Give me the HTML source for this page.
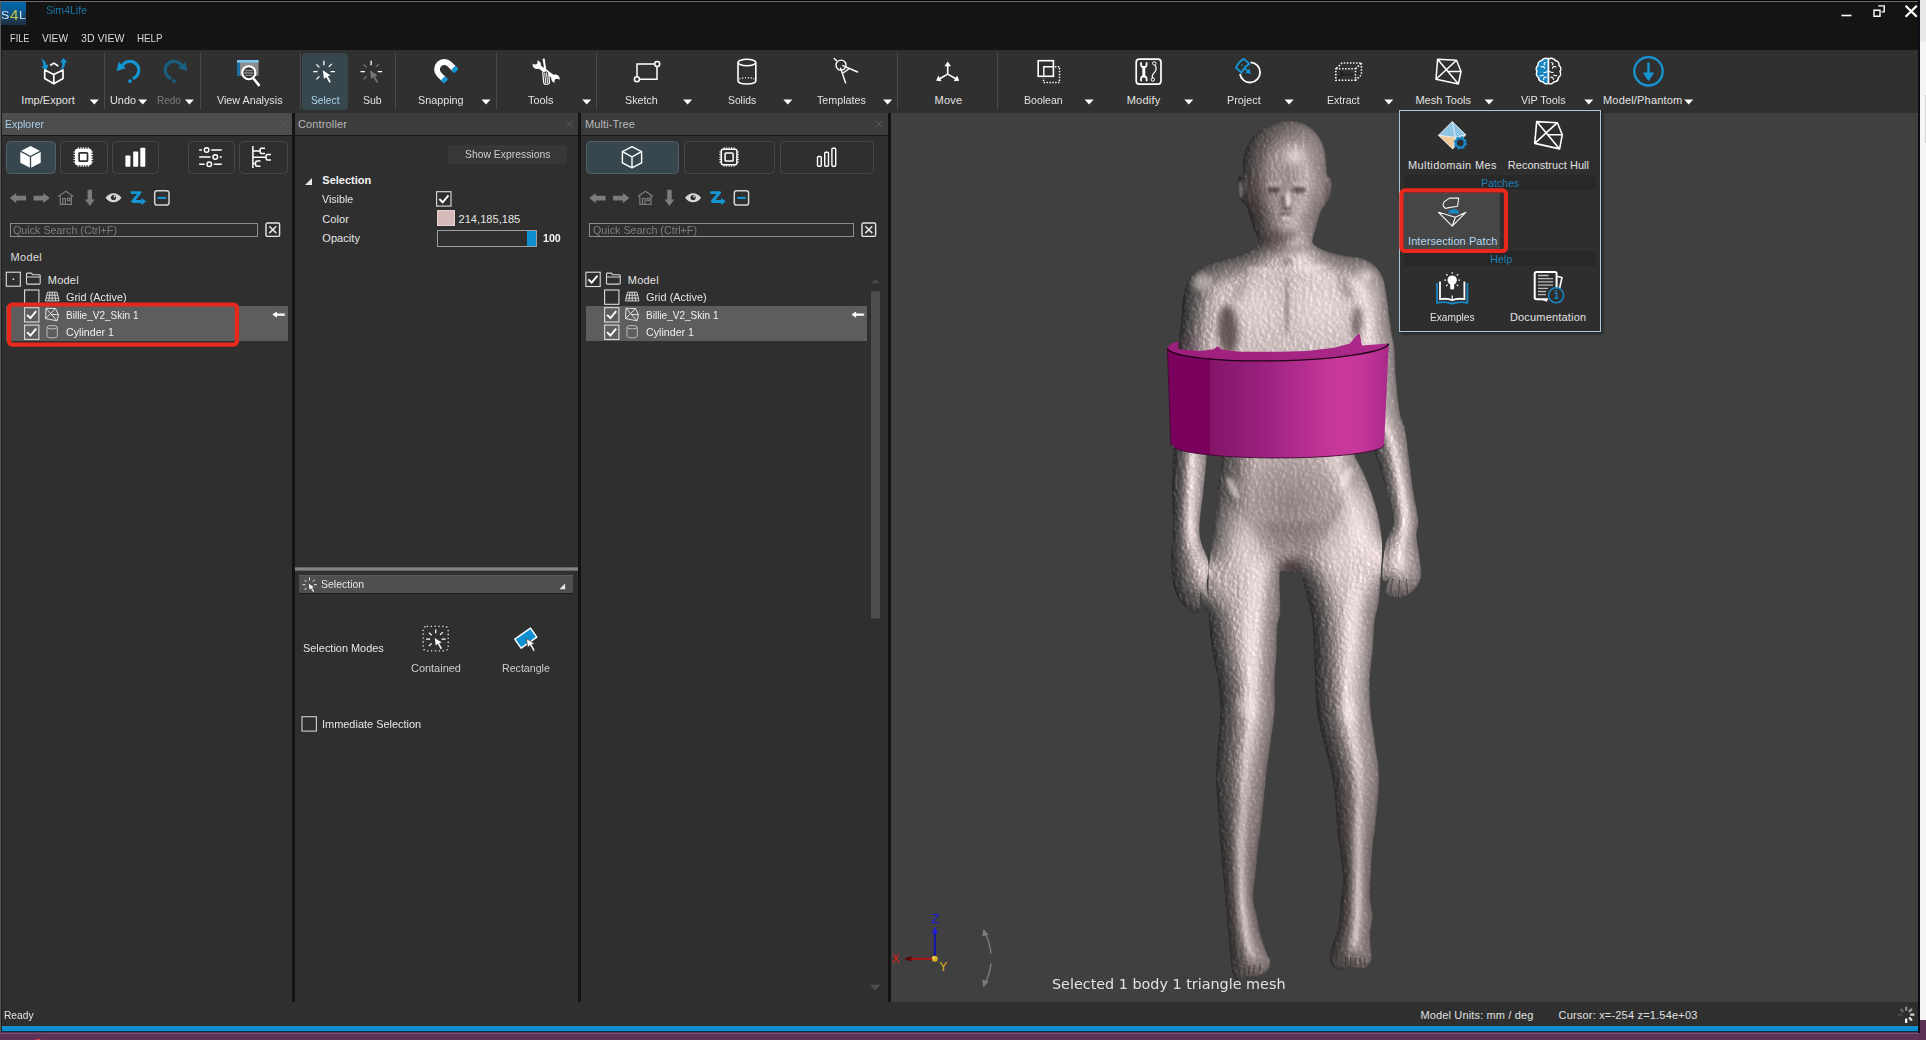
<!DOCTYPE html>
<html><head><meta charset="utf-8"><title>Sim4Life</title>
<style>
*{box-sizing:border-box;margin:0;padding:0}
html,body{width:1926px;height:1040px;overflow:hidden;background:#5c3357}
body{font-family:"Liberation Sans",sans-serif;font-size:11px;color:#e4e4e4;position:relative}
.abs{position:absolute}
svg{position:absolute;overflow:visible}
#win{position:absolute;left:0;top:0;width:1920px;height:1032px;background:#2f2f2f;overflow:hidden}
.t{position:absolute;white-space:nowrap}

#titlebar{position:absolute;left:0;top:0;width:1920px;height:50px;background:#141414}
#toolbar{position:absolute;left:0;top:50px;width:1920px;height:63px;background:#303030}
.hdr{position:absolute;top:113px;height:22px;background:#3c3c3c}
.vdiv{position:absolute;top:113px;width:3px;height:889px;background:#131313}

</style></head>
<body>
<div id="win">

<div id="titlebar">
<div class="abs" style="left:0;top:0;width:1920px;height:1px;background:#000"></div>
<div class="abs" style="left:0;top:1px;width:1920px;height:1px;background:#6e6e6e"></div>
<div class="abs" style="left:1px;top:2px;width:25px;height:23px;background:linear-gradient(#0068a8,#0a5c96 35%,#1d3e5c 75%,#1c2e40)"></div>
<span class="t" style="left:1.40px;top:8.77px;line-height:13px;height:13px;font-size:10.9px;color:#cfe4f4;transform:scaleX(1.14);transform-origin:0 0;">S</span><span class="t" style="left:9.60px;top:6.88px;line-height:17px;height:17px;font-size:14.2px;color:#bcc84e;transform:scaleX(1.08);transform-origin:0 0;">4</span><span class="t" style="left:18.60px;top:8.77px;line-height:13px;height:13px;font-size:10.9px;color:#cfe4f4;transform:scaleX(1.16);transform-origin:0 0;">L</span>
<span class="t" style="transform:scaleX(0.9580);transform-origin:0 0;left:46.00px;top:3.19px;line-height:14px;height:14px;color:#1b74a6;">Sim4Life</span>
<span class="t" style="transform:scaleX(0.8394);transform-origin:0 0;left:10.00px;top:31.19px;line-height:14px;height:14px;color:#d8d8d8;">FILE</span><span class="t" style="transform:scaleX(0.9248);transform-origin:0 0;left:42.00px;top:31.19px;line-height:14px;height:14px;color:#d8d8d8;">VIEW</span><span class="t" style="transform:scaleX(0.9617);transform-origin:0 0;left:80.50px;top:31.19px;line-height:14px;height:14px;color:#d8d8d8;">3D VIEW</span><span class="t" style="transform:scaleX(0.8874);transform-origin:0 0;left:136.50px;top:31.19px;line-height:14px;height:14px;color:#d8d8d8;">HELP</span>
<svg style="left:1836px;top:2px" width="84" height="24" viewBox="1836 2 84 24">
<path d="M1841.5 15.5h10" stroke="#fff" stroke-width="1.6" fill="none"/>
<path d="M1878.200 5.900h6v6h-2.700M1874 10.200h6v6h-6z" stroke="#fff" stroke-width="1.400" fill="none"/>
<path d="M1905.600 5.800l11.200 11M1916.800 5.800l-11.200 11" stroke="#fff" stroke-width="2.200" fill="none"/>
</svg>
</div>
<div id="toolbar"></div>
<div class="abs" style="left:0;top:2px;width:1px;height:1030px;background:#5a5a5a"></div>
<div class="abs" style="left:1px;top:50px;width:1px;height:982px;background:#1c1c1c"></div>
<div class="hdr" style="left:2px;width:290px;background:#4d4d4d"></div>
<div class="hdr" style="left:295px;width:283px"></div>
<div class="hdr" style="left:581px;width:307px"></div>
<span class="t" style="transform:scaleX(0.9521);transform-origin:0 0;left:5.00px;top:117.19px;line-height:14px;height:14px;color:#a6d0e8;">Explorer</span><span class="t" style="letter-spacing:0.132px;left:298.00px;top:117.19px;line-height:14px;height:14px;color:#b9b9b9;">Controller</span><span class="t" style="letter-spacing:0.090px;left:585.00px;top:117.19px;line-height:14px;height:14px;color:#b9b9b9;">Multi-Tree</span>
<svg style="left:0;top:113px" width="900" height="22" viewBox="0 113 900 22">
<path d="M280 120.5l7 7m0-7l-7 7" stroke="#5c5c5c" stroke-width="1" fill="none"/>
<path d="M566 120.5l7 7m0-7l-7 7" stroke="#5a5a5a" stroke-width="1" fill="none"/>
<path d="M875.5 120.5l7 7m0-7l-7 7" stroke="#5a5a5a" stroke-width="1" fill="none"/>
</svg>
<div class="abs" style="left:2px;top:135px;width:886px;height:1px;background:#171717"></div>
<div class="vdiv" style="left:292px"></div>
<div class="vdiv" style="left:578px"></div>
<div class="vdiv" style="left:888px"></div>
<div id="view3d" class="abs" style="left:891px;top:113px;width:1028px;height:889px;background:#404040"></div>
<div class="abs" style="left:302px;top:52.5px;width:46px;height:57.5px;background:#38474e;border-radius:4px"></div><span class="t" style="letter-spacing:0.031px;left:21.30px;top:93.39px;line-height:14px;height:14px;color:#e2e2e2;">Imp/Export</span><span class="t" style="transform:scaleX(0.9888);transform-origin:0 0;left:109.50px;top:93.39px;line-height:14px;height:14px;color:#e2e2e2;">Undo</span><span class="t" style="transform:scaleX(0.9089);transform-origin:0 0;left:157.30px;top:93.39px;line-height:14px;height:14px;color:#7a7a7a;">Redo</span><span class="t" style="transform:scaleX(0.9769);transform-origin:0 0;left:217.10px;top:93.39px;line-height:14px;height:14px;color:#e2e2e2;">View Analysis</span><span class="t" style="transform:scaleX(0.9322);transform-origin:0 0;left:310.60px;top:93.39px;line-height:14px;height:14px;color:#a9d5ef;">Select</span><span class="t" style="transform:scaleX(0.9554);transform-origin:0 0;left:362.50px;top:93.39px;line-height:14px;height:14px;color:#e2e2e2;">Sub</span><span class="t" style="transform:scaleX(0.9810);transform-origin:0 0;left:417.70px;top:93.39px;line-height:14px;height:14px;color:#e2e2e2;">Snapping</span><span class="t" style="transform:scaleX(0.9931);transform-origin:0 0;left:528.20px;top:93.39px;line-height:14px;height:14px;color:#e2e2e2;">Tools</span><span class="t" style="transform:scaleX(0.9754);transform-origin:0 0;left:625.40px;top:93.39px;line-height:14px;height:14px;color:#e2e2e2;">Sketch</span><span class="t" style="transform:scaleX(0.9379);transform-origin:0 0;left:727.70px;top:93.39px;line-height:14px;height:14px;color:#e2e2e2;">Solids</span><span class="t" style="transform:scaleX(0.9754);transform-origin:0 0;left:817.10px;top:93.39px;line-height:14px;height:14px;color:#e2e2e2;">Templates</span><span class="t" style="letter-spacing:0.275px;left:934.50px;top:93.39px;line-height:14px;height:14px;color:#e2e2e2;">Move</span><span class="t" style="transform:scaleX(0.9587);transform-origin:0 0;left:1024.10px;top:93.39px;line-height:14px;height:14px;color:#e2e2e2;">Boolean</span><span class="t" style="letter-spacing:0.217px;left:1126.70px;top:93.39px;line-height:14px;height:14px;color:#e2e2e2;">Modify</span><span class="t" style="transform:scaleX(0.9843);transform-origin:0 0;left:1226.50px;top:93.39px;line-height:14px;height:14px;color:#e2e2e2;">Project</span><span class="t" style="transform:scaleX(0.9552);transform-origin:0 0;left:1326.70px;top:93.39px;line-height:14px;height:14px;color:#e2e2e2;">Extract</span><span class="t" style="letter-spacing:0.027px;left:1415.40px;top:93.39px;line-height:14px;height:14px;color:#e2e2e2;">Mesh Tools</span><span class="t" style="transform:scaleX(0.9855);transform-origin:0 0;left:1520.50px;top:93.39px;line-height:14px;height:14px;color:#e2e2e2;">ViP Tools</span><span class="t" style="letter-spacing:0.181px;left:1603.00px;top:93.39px;line-height:14px;height:14px;color:#e2e2e2;">Model/Phantom</span><svg style="left:0;top:50px" width="1920" height="63" viewBox="0 50 1920 63"><path d="M104.5 52.5v57" stroke="#4b4b4b" stroke-width="1"/><path d="M200.5 52.5v57" stroke="#4b4b4b" stroke-width="1"/><path d="M300.5 52.5v57" stroke="#4b4b4b" stroke-width="1"/><path d="M395.5 52.5v57" stroke="#4b4b4b" stroke-width="1"/><path d="M496.5 52.5v57" stroke="#4b4b4b" stroke-width="1"/><path d="M596.5 52.5v57" stroke="#4b4b4b" stroke-width="1"/><path d="M897.5 52.5v57" stroke="#4b4b4b" stroke-width="1"/><path d="M997.5 52.5v57" stroke="#4b4b4b" stroke-width="1"/><path d="M89.8 99.4h9l-4.5 5z" fill="#fff"/><path d="M138.2 99.4h9l-4.5 5z" fill="#fff"/><path d="M184.9 99.4h9l-4.5 5z" fill="#fff"/><path d="M481.5 99.4h9l-4.5 5z" fill="#fff"/><path d="M582.2 99.4h9l-4.5 5z" fill="#fff"/><path d="M683.1 99.4h9l-4.5 5z" fill="#fff"/><path d="M783.3 99.4h9l-4.5 5z" fill="#fff"/><path d="M883.1 99.4h9l-4.5 5z" fill="#fff"/><path d="M1084.6 99.4h9l-4.5 5z" fill="#fff"/><path d="M1184.3 99.4h9l-4.5 5z" fill="#fff"/><path d="M1284.6 99.4h9l-4.5 5z" fill="#fff"/><path d="M1384.3 99.4h9l-4.5 5z" fill="#fff"/><path d="M1484.6 99.4h9l-4.5 5z" fill="#fff"/><path d="M1584.3 99.4h9l-4.5 5z" fill="#fff"/><path d="M1684.2 99.4h9l-4.5 5z" fill="#fff"/><g fill="none" stroke="#fff" stroke-width="1.7" stroke-linejoin="round" stroke-linecap="round">
<path d="M44.7 69.9v8.7l9.1 5.2 9.2-5.2v-8.7 M44.7 69.9l9.1 4.6 9.2-4.6 M53.8 74.5v9.3 M50.8 65l3-1.9 4 2.6"/></g>
<path d="M41.2 58.4c3.4 1.6 4.9 4 4.9 6.6l2.3-.6-1.8 5.6-5.4-3 2.3-.7c-.2-2.900-.6-5-2.300-7.900z" fill="#1496d4"/>
<path d="M63.500 57.900l3.900 4.600-2.300-.1c.2 3.500-1.500 6.500-5 7.700 1.700-2.100 2.400-4.700 2.200-7.700l-2.300.1z" fill="#1496d4"/><g transform="translate(130.20 71) scale(1 1)"><path d="M-8.400 -4.200A8.800 8.800 0 1 1 2.500 7.500" fill="none" stroke="#1496d4" stroke-width="3.2"/><path d="M-13.700 0l2.200-9 7.200 6.300z" fill="#1496d4"/><circle cx="-.2" cy="10.100" r="1.900" fill="#1496d4"/></g><g transform="translate(173.80 71) scale(-1 1)"><path d="M-8.400 -4.200A8.800 8.800 0 1 1 2.500 7.500" fill="none" stroke="#1b5f80" stroke-width="3.2"/><path d="M-13.700 0l2.200-9 7.200 6.300z" fill="#1b5f80"/><circle cx="-.2" cy="10.100" r="1.900" fill="#1b5f80"/></g><rect x="237" y="60" width="21.500" height="15.800" fill="#8b8b8b"/><rect x="237" y="60" width="21.500" height="2.700" fill="#7fc4ec"/><rect x="237" y="62.700" width="3" height="13.100" fill="#1b6fa3"/>
<circle cx="248.800" cy="72.700" r="6.500" fill="#2c2c2c" stroke="#fff" stroke-width="2.100"/>
<path d="M244.500 70.500h8.600M244 73h9.600M245 75.400h7.600" stroke="#8b8b8b" stroke-width="1.300"/>
<path d="M253.300 78.300l6.200 7.600" stroke="#fff" stroke-width="2.500"/><g stroke="#fff" stroke-width="1.3" fill="none"><path d="M323.90 60.80v4.4 M313.30 71.60h4.4 M330.50 71.60h4.4"/></g><g stroke="#fff" stroke-width="1.3" fill="none"><path d="M316.40 64.40l3 3 M331.80 63.90l-3 3 M316.40 79.40l3 -3"/></g><path d="M322.80 70.30l1.2 8.6 2.2-2 3.2 5.9 1.5-.9-3.2-5.8 2.9-.6z" fill="#fff"/><g stroke="#fff" stroke-width="1.3" fill="none"><path d="M371.10 60.80v4.4 M360.50 71.60h4.4 M377.70 71.60h4.4"/></g><g stroke="#777" stroke-width="1.3" fill="none"><path d="M363.60 64.40l3 3 M379.00 63.90l-3 3 M363.60 79.40l3 -3"/></g><path d="M370.00 70.30l1.2 8.6 2.2-2 3.2 5.9 1.5-.9-3.2-5.8 2.9-.6z" fill="#777"/><g transform="translate(444.3 69.300) rotate(-45)"><path d="M-7.300 8.500V0A7.300 7.300 0 0 1 7.300 0V8.500" fill="none" stroke="#fff" stroke-width="5.800"/>
<rect x="-10.200" y="5.300" width="5.800" height="4.600" fill="#1496d4"/><rect x="4.400" y="5.300" width="5.800" height="4.600" fill="#1496d4"/></g><g><path d="M539 66.500L553.500 77" stroke="#fff" stroke-width="3.600"/>
<circle cx="536.800" cy="64.800" r="4.200" fill="#fff"/><circle cx="535" cy="62" r="2.500" fill="#303030"/>
<circle cx="555.400" cy="78.600" r="4.200" fill="#fff"/><circle cx="557" cy="81.300" r="2.500" fill="#303030"/>
<path d="M543.600 58.600l1.900 12.400" stroke="#fff" stroke-width="2"/>
<g transform="rotate(-6 546 77.500)"><rect x="543.200" y="71" width="5.800" height="13.200" rx="1.800" fill="#303030" stroke="#fff" stroke-width="1.200"/><path d="M545.200 72.500v10.500M547 72.500v10.500" stroke="#fff" stroke-width=".9"/></g></g><g fill="none" stroke="#fff" stroke-width="1.500"><path d="M654.300 64H637v12.300M640 79.300h17V67"/><circle cx="657.200" cy="64" r="2.500"/><circle cx="636.900" cy="79.300" r="2.500"/></g><g fill="none" stroke="#fff" stroke-width="1.600"><path d="M738 62.500v18.300c0 4.300 17.800 4.300 17.800 0V62.500"/><ellipse cx="746.900" cy="62.500" rx="8.900" ry="3.300"/><path d="M739.500 79c3-1.700 11.800-1.700 14.800 0" stroke-dasharray="1.200 1.600" stroke-width="1.200"/></g><g fill="none" stroke="#fff" stroke-width="1.400" stroke-linecap="round"><circle cx="841" cy="65.100" r="5"/><path d="M834.200 58.500l2.200 2.100M842.800 65.600l14.800 6.400M840.600 68.200l5 14.700M843.500 72.800l5.200-3.800"/></g><g transform="translate(0 .8)"><g stroke="#fff" stroke-width="1.600" fill="none"><path d="M947.700 64v9.300l-8.500 4.900M947.700 73.300l8.500 4.900"/></g>
<path d="M947.700 60.800l3.300 4.600h-6.600z M936.200 80l2.100-5.200 3.300 5.600z M959.200 80l-2.100-5.200-3.300 5.600z" fill="#fff"/></g><g fill="none" stroke="#fff"><rect x="1038.200" y="60.700" width="15.200" height="15.600" stroke-width="1.600"/><path d="M1053.400 66.700h-9.600v9.600" stroke-width="1.400"/><path d="M1055 66.700h4.500v15.800h-16v-4.500" stroke-width="1.500" stroke-dasharray="1.400 1.500"/></g><g fill="none" stroke="#fff"><rect x="1136.200" y="59.200" width="24.800" height="24.900" rx="3.200" stroke-width="1.700"/>
<path d="M1143.800 66v11.500" stroke-width="3"/><path d="M1141 62.300v2.200a2.800 2.800 0 0 0 5.600 0v-2.200M1141 81.200v-2.200a2.800 2.800 0 0 1 5.600 0v2.200" stroke-width="1.700"/>
<path d="M1154.900 64.900c2.600 3.800 1 6-.8 8s-2.800 3.800-.9 5.500" stroke-width="1.200"/><circle cx="1154.300" cy="63.300" r="1.700" stroke-width="1"/><circle cx="1152.800" cy="79.500" r="1.700" stroke-width="1"/></g><path d="M1240 74A10.100 10.100 0 1 0 1250.600 62.300" fill="none" stroke="#fff" stroke-width="1.800"/>
<path d="M1236 67.800C1237.500 64 1240 61 1243.800 58.900L1249.400 63.900C1246 65.800 1243.400 68.800 1241.600 72.700z" fill="none" stroke="#1496d4" stroke-width="1.900" stroke-linejoin="round"/>
<path d="M1245.200 68.700l3 2.800" stroke="#1496d4" stroke-width="1.700"/><path d="M1250.800 74l-5.500-1.200 4.300-4.300z" fill="#1496d4"/><circle cx="1242" cy="65.300" r=".8" fill="#1496d4"/><path d="M1341.800 68.500v5.900h11M1341.800 74.400l-5.200 5.400M1356 74.400l4.500-.2" fill="none" stroke="#0c0c0c" stroke-width="1.500" stroke-dasharray="1.500 1.600"/><g fill="none" stroke="#f4f4f4" stroke-width="1.600" stroke-dasharray="1.550 1.550"><path d="M1335.800 68.800h19.700v11.500h-19.700zM1336.500 68.300l5.600-5.300h19.300M1361.400 63v11.800l-5.600 5.300M1361 63.300l-5.300 5.300"/></g><g fill="none" stroke="#fff" stroke-width="1.500" stroke-linejoin="round"><path d="M1437.600 59.200l18.900 1 4.500 11.300-2.600 12.400-22.400-4.600zM1437.600 59.200l20.800 24.700M1456.500 60.200l-20.500 19.100M1448 71.500l13 0"/></g><g><path d="M1548.500 58.800c-2.500-1-5.500-.3-6.800 1.700-2.600.4-4 2.600-3.700 4.800-1.900 1.500-2.400 4.200-1 6.200-1.200 2.200-.5 4.900 1.600 6.100.1 2.400 2 4.100 4.300 4.100 1.300 2 3.800 2.700 5.600 1.700z" fill="#1785c0" stroke="#fff" stroke-width="1.500" stroke-linejoin="round"/>
<path d="M1548.500 58.800c2.500-1 5.500-.3 6.800 1.700 2.600.4 4 2.600 3.700 4.800 1.900 1.500 2.400 4.200 1 6.200 1.200 2.200.5 4.900-1.600 6.100-.1 2.400-2 4.100-4.300 4.100-1.300 2-3.800 2.700-5.600 1.700z" fill="#303030" stroke="#fff" stroke-width="1.500" stroke-linejoin="round"/>
<g fill="none" stroke="#fff" stroke-width="1.100" stroke-linecap="round"><path d="M1548.500 58.800v24.600"/><path d="M1545.500 62.500c-1.500.2-2 1.600-.8 2.400M1541 67c1.500-1 3.200-.4 3.500 1.200M1543.800 72.200c1.600.6 3 0 4.200-1M1540.200 75.500c1.200.4 2.300.2 3.200-.5M1546.300 77.200c-1.700-.4-3 .8-2.600 2.300"/>
<path d="M1551.500 62.500c1.500.2 2 1.600.8 2.400M1556 67c-1.500-1-3.200-.4-3.500 1.200M1553.200 72.200c-1.600.6-3 0-4.200-1M1556.800 75.500c-1.200.4-2.300.2-3.200-.5M1550.700 77.200c1.700-.4 3 .8 2.600 2.300"/></g></g><circle cx="1648.500" cy="71.300" r="14.200" fill="none" stroke="#1496d4" stroke-width="2.300"/><path d="M1648.500 63.500v10" stroke="#1496d4" stroke-width="2.400" stroke-linecap="round"/><path d="M1643.500 73h10l-5 7.600z" fill="#1496d4" stroke="#1496d4" stroke-width="1" stroke-linejoin="round"/></svg><div class="abs" style="left:6.0px;top:141px;width:49.5px;height:33px;background:#38474e;border:1px solid #4f6068;border-radius:4.500px"></div><div class="abs" style="left:60.0px;top:141px;width:48.0px;height:33px;border:1px solid #474747;border-radius:4.500px"></div><div class="abs" style="left:112.0px;top:141px;width:47.0px;height:33px;border:1px solid #474747;border-radius:4.500px"></div><div class="abs" style="left:188.0px;top:141px;width:47.0px;height:33px;border:1px solid #474747;border-radius:4.500px"></div><div class="abs" style="left:239.0px;top:141px;width:49.0px;height:33px;border:1px solid #474747;border-radius:4.500px"></div><div class="abs" style="left:586.0px;top:141px;width:93.0px;height:33px;background:#38474e;border:1px solid #4f6068;border-radius:4.500px"></div><div class="abs" style="left:684.0px;top:141px;width:91.0px;height:33px;border:1px solid #474747;border-radius:4.500px"></div><div class="abs" style="left:780.0px;top:141px;width:94.0px;height:33px;border:1px solid #474747;border-radius:4.500px"></div><div class="abs" style="left:9.7px;top:222.500px;width:248.3px;height:14px;border:1px solid #8c8c8c"></div><span class="t" style="transform:scaleX(0.9750);transform-origin:0 0;left:13.20px;top:222.69px;line-height:14px;height:14px;color:#7d7d7d;">Quick Search (Ctrl+F)</span><svg style="left:265.0px;top:222px" width="16" height="16" viewBox="0 0 16 16"><rect x="1" y="1" width="13.600" height="13.400" rx="1.300" fill="none" stroke="#e6e6e6" stroke-width="1.400"/><path d="M4.300 4.300l7 6.800M11.300 4.300l-7 6.800" stroke="#e6e6e6" stroke-width="1.500"/></svg><div class="abs" style="left:589.3px;top:222.500px;width:264.4px;height:14px;border:1px solid #8c8c8c"></div><span class="t" style="transform:scaleX(0.9750);transform-origin:0 0;left:592.80px;top:222.69px;line-height:14px;height:14px;color:#7d7d7d;">Quick Search (Ctrl+F)</span><svg style="left:861.0px;top:222px" width="16" height="16" viewBox="0 0 16 16"><rect x="1" y="1" width="13.600" height="13.400" rx="1.300" fill="none" stroke="#e6e6e6" stroke-width="1.400"/><path d="M4.300 4.300l7 6.800M11.300 4.300l-7 6.800" stroke="#e6e6e6" stroke-width="1.500"/></svg><div class="abs" style="left:6px;top:305.500px;width:282px;height:35.500px;background:#5d5d5d"></div><div class="abs" style="left:586px;top:305.500px;width:281px;height:35.500px;background:#5d5d5d"></div><span class="t" style="letter-spacing:0.308px;left:10.60px;top:249.99px;line-height:14px;height:14px;color:#dcdcdc;">Model</span><span class="t" style="letter-spacing:0.208px;left:47.80px;top:272.59px;line-height:14px;height:14px;color:#e6e6e6;">Model</span><span class="t" style="transform:scaleX(0.9915);transform-origin:0 0;left:65.80px;top:289.79px;line-height:14px;height:14px;color:#e6e6e6;">Grid (Active)</span><span class="t" style="transform:scaleX(0.9121);transform-origin:0 0;left:66.00px;top:307.69px;line-height:14px;height:14px;color:#f0f0f0;">Billie_V2_Skin 1</span><span class="t" style="transform:scaleX(0.9693);transform-origin:0 0;left:65.80px;top:324.99px;line-height:14px;height:14px;color:#f0f0f0;">Cylinder 1</span><span class="t" style="letter-spacing:0.208px;left:627.80px;top:272.59px;line-height:14px;height:14px;color:#e6e6e6;">Model</span><span class="t" style="transform:scaleX(0.9915);transform-origin:0 0;left:645.80px;top:289.79px;line-height:14px;height:14px;color:#e6e6e6;">Grid (Active)</span><span class="t" style="transform:scaleX(0.9121);transform-origin:0 0;left:646.00px;top:307.69px;line-height:14px;height:14px;color:#f0f0f0;">Billie_V2_Skin 1</span><span class="t" style="transform:scaleX(0.9693);transform-origin:0 0;left:645.80px;top:324.99px;line-height:14px;height:14px;color:#f0f0f0;">Cylinder 1</span><svg style="left:0;top:136px" width="890" height="866" viewBox="0 136 890 866"><path d="M30.500 146l10.200 5.200v11.500l-10.200 5.400-10.200-5.400v-11.500z" fill="#fff"/><path d="M20.300 151.200l10.200 5.300 10.200-5.300M30.500 156.500v11.600" fill="none" stroke="#38474e" stroke-width="1.300"/><rect x="75.0" y="148.7" width="16.600" height="16.600" rx="2" fill="#fff"/><g stroke="#fff" stroke-width="1.100"><path d="M78.30 147.20v19.600M73.50 152.00h19.600"/><path d="M80.80 147.20v19.600M73.50 154.50h19.600"/><path d="M83.30 147.20v19.600M73.50 157.00h19.600"/><path d="M85.80 147.20v19.600M73.50 159.50h19.600"/><path d="M88.30 147.20v19.600M73.50 162.00h19.600"/></g><rect x="79.1" y="152.8" width="8.400" height="8.400" rx=".800" fill="#fff" stroke="#303030" stroke-width="1.700"/><rect x="125.400" y="155.500" width="5" height="11.300" rx=".800" fill="#fff"/><rect x="133.200" y="151.600" width="5" height="15.200" rx=".800" fill="#fff"/><rect x="140.300" y="147.700" width="5" height="19.100" rx=".800" fill="#fff"/><g fill="none" stroke="#fff" stroke-width="1.500"><path d="M199.200 150h2.600M211.200 150h10.600M199.200 157h11.400M219.800 157h2M199.200 164.200h5.400M213.800 164.200h8"/><circle cx="206.600" cy="150" r="2.300"/><circle cx="215.300" cy="157" r="2.300"/><circle cx="209.300" cy="164.200" r="2.300"/></g><g fill="none" stroke="#fff" stroke-width="1.500"><path d="M252.900 146.100v21.800M252.900 150.900h7.200M265 148.200h-3.400q-1.500 0-1.500 1.500v2.400q0 1.500 1.500 1.500h3.400M252.900 157.200h13M271 154.500h-3.400q-1.500 0-1.500 1.500v2.400q0 1.500 1.500 1.500h3.400M252.900 163.600h2.600M260.500 160.900h-3.400q-1.500 0-1.500 1.500v2.400q0 1.500 1.500 1.500h3.400"/></g><g fill="none" stroke="#fff" stroke-width="1.400" stroke-linejoin="round"><path d="M632 146.700l9.600 5v11.200l-9.600 5-9.600-5v-11.200zM622.400 151.700l9.600 5.200 9.600-5.200M632 156.900v11"/></g><g stroke="#fff" stroke-width=".900"><path d="M724.10 147.20v19.600M719.30 152.00h19.600"/><path d="M726.60 147.20v19.600M719.30 154.50h19.600"/><path d="M729.10 147.20v19.600M719.30 157.00h19.600"/><path d="M731.60 147.20v19.600M719.30 159.50h19.600"/><path d="M734.10 147.20v19.600M719.30 162.00h19.600"/></g><rect x="721.3" y="149.2" width="15.600" height="15.600" rx="2" fill="#303030" stroke="#fff" stroke-width="1.500"/><rect x="725.1" y="153.0" width="8" height="8" rx=".800" fill="none" stroke="#fff" stroke-width="1.500"/><g fill="none" stroke="#fff" stroke-width="1.400"><rect x="817.500" y="156.500" width="3.800" height="9.800" rx="1"/><rect x="824.700" y="152.300" width="3.800" height="14" rx="1"/><rect x="831.900" y="148.200" width="3.800" height="18.100" rx="1"/></g><g transform="translate(0.0 0)"><path d="M9.700 198l6.500-5v2.800h9.800v4.600h-9.800v2.800z" fill="#7b7b7b"/><path d="M49.800 198l-6.500-5v2.800h-9.800v4.600h9.800v2.800z" fill="#7b7b7b"/><g fill="none" stroke="#7b7b7b" stroke-width="1.200"><path d="M58.200 196.600l7.600-5.300 7.600 5.300M60.200 195.800v8.500h11.200v-8.500M62.800 204v-5.500h2.600V204M67.500 198.300h2.300v2.300h-2.300z"/></g><path d="M89.800 206.100l-4.900-6.500h2.700v-9.900h4.500v9.900h2.700z" fill="#7b7b7b"/><path d="M105.500 197.700c4.500-6 11.500-6 16 0-4.500 6-11.500 6-16 0z" fill="#d9d9d9"/><circle cx="113.500" cy="197.500" r="2.600" fill="#303030"/><circle cx="114.500" cy="196.500" r=".9" fill="#d9d9d9"/><path d="M130.800 192.600h9.200l-7.300 8.900h8.800" fill="none" stroke="#1496d4" stroke-width="2.900" stroke-linejoin="round"/><path d="M146.200 201.500l-4.800-3.500v7z" fill="#1496d4"/><rect x="154.700" y="190.800" width="14.300" height="14.300" rx="2.400" fill="none" stroke="#d4d4d4" stroke-width="1.500"/><path d="M157.600 197.900h8.500" stroke="#1496d4" stroke-width="2.100"/></g><g transform="translate(579.6 0)"><path d="M9.700 198l6.500-5v2.800h9.800v4.600h-9.800v2.800z" fill="#7b7b7b"/><path d="M49.800 198l-6.500-5v2.800h-9.800v4.600h9.800v2.800z" fill="#7b7b7b"/><g fill="none" stroke="#7b7b7b" stroke-width="1.200"><path d="M58.200 196.600l7.600-5.300 7.600 5.300M60.200 195.800v8.500h11.200v-8.500M62.800 204v-5.500h2.600V204M67.500 198.300h2.300v2.300h-2.300z"/></g><path d="M89.800 206.100l-4.900-6.500h2.700v-9.900h4.500v9.900h2.700z" fill="#7b7b7b"/><path d="M105.500 197.700c4.500-6 11.500-6 16 0-4.500 6-11.500 6-16 0z" fill="#d9d9d9"/><circle cx="113.500" cy="197.500" r="2.600" fill="#303030"/><circle cx="114.500" cy="196.500" r=".9" fill="#d9d9d9"/><path d="M130.800 192.600h9.200l-7.300 8.900h8.800" fill="none" stroke="#1496d4" stroke-width="2.900" stroke-linejoin="round"/><path d="M146.200 201.500l-4.800-3.500v7z" fill="#1496d4"/><rect x="154.700" y="190.800" width="14.300" height="14.300" rx="2.400" fill="none" stroke="#d4d4d4" stroke-width="1.500"/><path d="M157.600 197.900h8.500" stroke="#1496d4" stroke-width="2.100"/></g><g transform="translate(0.0 0)"><rect x="6.300" y="272.200" width="14" height="14" fill="none" stroke="#dedede" stroke-width="1.100"/><rect x="12.600" y="278.500" width="1.500" height="1.500" fill="#eee"/><path d="M26.500 275.200v-1.200q0-.9.900-.9h3.800l1.500 1.600h6.600q.9 0 .9.900v7.600q0 .9-.9.900h-11.900q-.9 0-.9-.9zM26.500 277h13.700" fill="none" stroke="#d6d6d6" stroke-width="1.100"/><rect x="24.6" y="290.0" width="14.300" height="14.300" fill="none" stroke="#dedede" stroke-width="1.100"/><g fill="none" stroke="#d6d6d6" stroke-width="1"><path d="M47.500 292.200h9.500l2 8.700h-13.600zM46.800 295.200h10.900M46.100 298.200h12.300M50 292.200l-1.200 8.700M52.200 292.200v8.700M54.500 292.200l1.200 8.700"/></g><rect x="24.6" y="307.7" width="14.300" height="14.300" fill="none" stroke="#dedede" stroke-width="1.100"/><path d="M27.1 314.8l3.300 3.400 5.800-7" fill="none" stroke="#fff" stroke-width="1.900"/><g fill="none" stroke="#e2e2e2" stroke-width="1" stroke-linejoin="round"><path d="M46 308.200l9.500.4 3 6-1.500 6.200-11.400-2.200zM46 308.200l11 12.600M55.500 308.600l-9.900 10M52 314.500l6.500.1"/></g><rect x="24.6" y="325.1" width="14.300" height="14.300" fill="none" stroke="#dedede" stroke-width="1.100"/><path d="M27.1 332.2l3.300 3.400 5.800-7" fill="none" stroke="#fff" stroke-width="1.900"/><g fill="none" stroke="#bdbdbd" stroke-width="1"><path d="M47 327.200v9c0 2.200 10.300 2.200 10.300 0v-9"/><ellipse cx="52.150" cy="327.200" rx="5.150" ry="1.700"/></g><path d="M272.3 314.600l4.600-3.200v2.100h8.800l-1.600 1.100 1.600 1.100h-8.800v2.100z" fill="#fff"/></g><g transform="translate(580.0 0)"><rect x="5.9" y="272.2" width="14.300" height="14.300" fill="none" stroke="#dedede" stroke-width="1.100"/><path d="M8.4 279.3l3.300 3.400 5.800-7" fill="none" stroke="#fff" stroke-width="1.900"/><path d="M26.500 275.200v-1.200q0-.9.900-.9h3.800l1.500 1.600h6.600q.9 0 .9.900v7.600q0 .9-.9.900h-11.900q-.9 0-.9-.9zM26.500 277h13.700" fill="none" stroke="#d6d6d6" stroke-width="1.100"/><rect x="24.6" y="290.0" width="14.300" height="14.300" fill="none" stroke="#dedede" stroke-width="1.100"/><g fill="none" stroke="#d6d6d6" stroke-width="1"><path d="M47.500 292.200h9.500l2 8.700h-13.600zM46.800 295.200h10.900M46.100 298.200h12.300M50 292.200l-1.200 8.700M52.200 292.200v8.700M54.500 292.200l1.200 8.700"/></g><rect x="24.6" y="307.7" width="14.300" height="14.300" fill="none" stroke="#dedede" stroke-width="1.100"/><path d="M27.1 314.8l3.300 3.400 5.800-7" fill="none" stroke="#fff" stroke-width="1.900"/><g fill="none" stroke="#e2e2e2" stroke-width="1" stroke-linejoin="round"><path d="M46 308.200l9.500.4 3 6-1.500 6.200-11.400-2.200zM46 308.200l11 12.600M55.500 308.600l-9.900 10M52 314.500l6.500.1"/></g><rect x="24.6" y="325.1" width="14.300" height="14.300" fill="none" stroke="#dedede" stroke-width="1.100"/><path d="M27.1 332.2l3.300 3.400 5.800-7" fill="none" stroke="#fff" stroke-width="1.900"/><g fill="none" stroke="#bdbdbd" stroke-width="1"><path d="M47 327.200v9c0 2.200 10.300 2.200 10.300 0v-9"/><ellipse cx="52.150" cy="327.200" rx="5.150" ry="1.700"/></g><path d="M271.5 314.600l4.600-3.200v2.100h8.800l-1.600 1.100 1.600 1.100h-8.800v2.100z" fill="#fff"/></g><rect x="871" y="291.300" width="9" height="327.200" fill="#4d4d4d"/><path d="M871.200 283.600l4.300-4.600 4.300 4.600z" fill="#4b4b4b"/><path d="M869.500 984.800h11l-5.500 5.400z" fill="#4f4f4f"/><rect x="9" y="304.500" width="227.900" height="40.200" rx="3.500" fill="none" stroke="#e8281c" stroke-width="4.200"/></svg><div class="abs" style="left:448px;top:144.500px;width:119px;height:19.500px;background:#373737;border-radius:3px"></div><span class="t" style="transform:scaleX(0.9438);transform-origin:0 0;left:464.90px;top:147.49px;line-height:14px;height:14px;color:#cdcdcd;">Show Expressions</span><span class="t" style="letter-spacing:0.011px;left:322.30px;top:173.09px;line-height:14px;height:14px;color:#f4f4f4;font-weight:bold;">Selection</span><span class="t" style="transform:scaleX(0.9689);transform-origin:0 0;left:322.30px;top:192.19px;line-height:14px;height:14px;color:#e6e6e6;">Visible</span><span class="t" style="letter-spacing:0.063px;left:322.30px;top:211.59px;line-height:14px;height:14px;color:#e6e6e6;">Color</span><span class="t" style="letter-spacing:0.058px;left:322.30px;top:230.69px;line-height:14px;height:14px;color:#e6e6e6;">Opacity</span><span class="t" style="letter-spacing:0.057px;left:458.50px;top:212.19px;line-height:14px;height:14px;color:#e6e6e6;">214,185,185</span><span class="t" style="transform:scaleX(0.9699);transform-origin:0 0;left:542.70px;top:231.39px;line-height:14px;height:14px;color:#f4f4f4;font-weight:bold;">100</span><div class="abs" style="left:436.800px;top:209.700px;width:17.800px;height:16.800px;background:#d6b9b9;border:1px solid #e6d2d2"></div><div class="abs" style="left:436.800px;top:229.500px;width:100.200px;height:17px;border:1px solid #a0a0a0"></div><div class="abs" style="left:527px;top:230.500px;width:9px;height:15px;background:#0d8fd2"></div><div class="abs" style="left:295px;top:566.500px;width:283px;height:4.500px;background:linear-gradient(#565656,#8e8e8e 45%,#8e8e8e 55%,#565656)"></div><div class="abs" style="left:299px;top:574.800px;width:274px;height:19.200px;background:#4f4f4f;border-top:1px solid #5b5b5b;border-bottom:1px solid #1c1c1c"></div><span class="t" style="transform:scaleX(0.9547);transform-origin:0 0;left:321.20px;top:577.29px;line-height:14px;height:14px;color:#e6e6e6;">Selection</span><span class="t" style="transform:scaleX(0.9936);transform-origin:0 0;left:303.40px;top:641.19px;line-height:14px;height:14px;color:#e6e6e6;">Selection Modes</span><span class="t" style="transform:scaleX(0.9951);transform-origin:0 0;left:410.60px;top:661.09px;line-height:14px;height:14px;color:#cdcdcd;">Contained</span><span class="t" style="transform:scaleX(0.9671);transform-origin:0 0;left:502.00px;top:661.09px;line-height:14px;height:14px;color:#cdcdcd;">Rectangle</span><span class="t" style="transform:scaleX(0.9954);transform-origin:0 0;left:322.30px;top:716.89px;line-height:14px;height:14px;color:#e6e6e6;">Immediate Selection</span><svg style="left:295px;top:136px" width="283" height="866" viewBox="295 136 283 866"><path d="M312 178v7h-7z" fill="#e6e6e6"/><rect x="436.600" y="191.700" width="14.400" height="14.400" fill="none" stroke="#dedede" stroke-width="1.100"/><path d="M439.400 199l3.300 3.400 5.800-7" fill="none" stroke="#fff" stroke-width="1.900"/><path d="M565.100 583.500v5.700h-5.700z" fill="#e6e6e6"/><g transform="translate(309.50 584.70) scale(0.660)"><g stroke="#fff" stroke-width="1.400" fill="none"><path d="M0 -10.800v4.400M-10.600 0h4.400M6.600 0h4.400M-7.500 -7.200l3 3M7.900 -7.700l-3 3M-7.500 7.800l3 -3"/></g><path d="M-1.100 -1.300l1.200 8.600 2.200-2 3.200 5.900 1.500-.9-3.200-5.800 2.900-.6z" fill="#fff"/></g><rect x="423.200" y="626.400" width="25" height="24.400" rx="3.500" fill="none" stroke="#e6e6e6" stroke-width="1.300" stroke-dasharray="1.300 2.600"/><g transform="translate(435.70 639.10) scale(0.900)"><g stroke="#fff" stroke-width="1.400" fill="none"><path d="M0 -10.800v4.400M-10.600 0h4.400M6.600 0h4.400M-7.500 -7.200l3 3M7.900 -7.700l-3 3M-7.500 7.800l3 -3"/></g><path d="M-1.100 -1.300l1.200 8.600 2.200-2 3.200 5.900 1.500-.9-3.200-5.800 2.900-.6z" fill="#fff"/></g><path d="M514.800 639.100l15.700-11 6.300 9-15.700 11z" fill="#0d8fd2" stroke="#fff" stroke-width="1.500" stroke-linejoin="round"/><path d="M526.400 638.600l1.300 9 2.300-2.200 3.400 6 1.800-1-3.400-6 3-.7z" fill="#fff" stroke="#303030" stroke-width=".700"/><rect x="302" y="716.700" width="14.400" height="14.400" fill="none" stroke="#cfcfcf" stroke-width="1.100"/></svg><svg style="left:891px;top:113px" width="1028" height="889" viewBox="891 113 1028 889"><defs>
<path id="bodyp" d="M1286.0 120.8C1292.0 120.3 1298.2 121.3 1303.4 123.5C1308.6 125.7 1313.4 129.9 1316.9 134.2C1320.4 138.4 1322.7 143.6 1324.3 149.0C1325.9 154.4 1325.9 162.0 1326.3 166.5C1326.7 171.0 1326.1 174.1 1326.8 176.0C1327.5 177.9 1329.6 176.9 1330.4 178.2C1331.2 179.5 1331.7 181.4 1331.7 184.0C1331.7 186.6 1330.9 191.1 1330.2 194.0C1329.5 196.9 1328.9 199.2 1327.7 201.5C1326.5 203.8 1324.2 205.8 1322.8 208.0C1321.4 210.2 1320.5 212.0 1319.5 215.0C1318.5 218.0 1317.5 222.5 1316.5 226.0C1315.5 229.5 1314.2 233.2 1313.5 236.0C1312.8 238.8 1311.8 241.1 1312.5 243.0C1313.2 244.9 1315.1 245.9 1318.0 247.5C1320.9 249.1 1325.1 251.1 1330.0 252.5C1334.9 253.9 1341.7 255.1 1347.3 256.2C1352.9 257.2 1358.9 257.2 1363.4 258.8C1367.9 260.4 1371.1 262.7 1374.2 265.6C1377.3 268.5 1380.3 271.6 1382.3 276.3C1384.3 281.0 1385.2 287.3 1386.3 293.8C1387.4 300.3 1388.1 308.7 1389.0 315.4C1389.9 322.1 1390.8 328.8 1391.7 334.2C1392.6 339.6 1393.7 341.0 1394.4 347.7C1395.1 354.4 1394.8 364.0 1395.7 374.6C1396.6 385.2 1398.0 402.3 1399.6 411.5C1401.2 420.7 1403.6 421.9 1405.2 430.0C1406.8 438.1 1407.9 450.2 1409.2 460.3C1410.5 470.4 1411.7 480.5 1413.2 490.6C1414.7 500.7 1417.8 513.5 1418.3 520.9C1418.8 528.3 1416.3 529.3 1416.5 535.0C1416.7 540.7 1418.5 548.5 1419.3 555.3C1420.1 562.0 1421.4 570.7 1421.3 575.5C1421.2 580.3 1420.0 581.2 1418.5 584.0C1417.0 586.8 1414.4 590.3 1412.0 592.5C1409.6 594.7 1406.8 596.1 1404.0 597.0C1401.2 597.9 1397.8 597.9 1395.0 597.7C1392.2 597.5 1388.5 597.6 1387.0 596.0C1385.5 594.4 1385.6 591.0 1386.0 588.0C1386.4 585.0 1389.5 579.1 1389.5 578.0C1389.5 576.9 1387.1 581.3 1386.0 581.5C1384.9 581.7 1383.4 581.2 1382.8 579.0C1382.2 576.8 1382.4 572.0 1382.6 568.0C1382.8 564.0 1383.2 560.1 1383.9 555.3C1384.6 550.5 1385.5 544.4 1387.0 539.0C1388.5 533.6 1392.7 529.3 1393.0 522.9C1393.3 516.5 1391.0 509.4 1389.0 500.7C1387.0 491.9 1383.4 478.8 1380.9 470.4C1378.4 462.0 1375.5 455.9 1373.8 450.2C1372.1 444.5 1374.0 438.4 1371.0 436.0C1368.0 433.6 1358.7 433.0 1356.0 436.0C1353.3 439.0 1353.9 449.2 1354.6 454.2C1355.3 459.2 1358.0 461.6 1360.0 466.0C1362.0 470.4 1364.0 473.0 1366.8 480.5C1369.6 488.0 1374.4 500.7 1376.9 510.8C1379.4 520.9 1381.2 531.0 1381.9 541.1C1382.6 551.2 1381.4 561.3 1380.9 571.4C1380.4 581.5 1379.9 593.6 1378.9 601.7C1377.9 609.8 1375.8 611.9 1374.8 620.0C1373.8 628.1 1373.6 640.2 1372.8 650.3C1372.0 660.4 1370.0 670.5 1369.7 680.6C1369.4 690.7 1369.9 700.8 1370.7 710.9C1371.5 721.0 1373.5 731.1 1374.8 741.2C1376.1 751.3 1378.3 761.4 1378.8 771.5C1379.3 781.6 1378.5 792.0 1377.8 801.7C1377.1 811.5 1375.6 822.6 1374.8 830.0C1374.0 837.4 1373.3 839.0 1372.7 846.0C1372.1 853.0 1371.3 863.2 1370.9 871.9C1370.5 880.5 1369.8 890.4 1370.1 897.9C1370.4 905.4 1372.7 911.2 1372.7 917.0C1372.7 922.8 1370.4 927.0 1370.1 932.5C1369.8 938.0 1370.6 945.5 1370.9 949.8C1371.2 954.1 1371.9 956.2 1371.8 958.5C1371.7 960.8 1371.5 961.8 1370.1 963.5C1368.6 965.2 1366.1 968.1 1363.1 968.9C1360.1 969.7 1354.9 968.8 1352.0 968.5C1349.1 968.2 1348.0 966.9 1345.8 967.2C1343.6 967.5 1341.2 970.6 1338.9 970.3C1336.6 970.0 1333.6 967.9 1332.0 965.4C1330.4 962.9 1329.1 959.0 1329.4 955.0C1329.7 951.0 1332.1 946.4 1333.7 941.2C1335.3 936.0 1337.8 930.2 1338.9 923.9C1340.1 917.5 1339.9 910.3 1340.6 903.1C1341.3 895.9 1343.2 888.7 1343.2 880.6C1343.2 872.5 1341.6 863.0 1340.6 854.6C1339.6 846.2 1338.3 838.8 1337.4 830.0C1336.5 821.2 1336.4 811.5 1335.4 801.7C1334.4 792.0 1333.4 781.6 1331.4 771.5C1329.4 761.4 1325.7 751.3 1323.3 741.2C1320.9 731.1 1318.5 721.0 1317.2 710.9C1315.9 700.8 1315.7 690.7 1315.2 680.6C1314.7 670.5 1314.7 660.4 1314.2 650.3C1313.7 640.2 1313.2 628.4 1312.2 620.0C1311.2 611.6 1309.5 606.3 1308.0 600.0C1306.5 593.7 1304.7 586.6 1303.5 582.0C1302.3 577.4 1303.1 574.0 1301.0 572.5C1298.9 571.0 1294.2 573.3 1291.0 573.0C1287.8 572.7 1283.9 569.8 1282.0 570.5C1280.1 571.2 1279.9 570.1 1279.6 577.0C1279.3 583.9 1280.6 603.8 1280.3 611.8C1280.0 619.8 1278.1 618.6 1277.5 625.0C1276.9 631.4 1277.2 641.0 1276.8 650.3C1276.3 659.6 1275.1 670.5 1274.8 680.6C1274.5 690.7 1275.5 700.8 1274.8 710.9C1274.1 721.0 1272.1 731.1 1270.8 741.2C1269.5 751.3 1267.9 761.4 1266.7 771.5C1265.5 781.6 1264.7 792.0 1263.7 801.7C1262.7 811.5 1261.6 822.6 1260.7 830.0C1259.8 837.4 1259.2 839.0 1258.4 846.0C1257.6 853.0 1256.7 863.2 1255.8 871.9C1254.9 880.5 1253.0 890.7 1253.2 897.9C1253.4 905.1 1255.6 909.4 1256.7 915.2C1257.8 921.0 1258.5 926.4 1260.1 932.5C1261.7 938.6 1264.5 946.7 1266.2 951.6C1267.9 956.5 1270.2 958.8 1270.5 962.0C1270.8 965.2 1269.8 968.3 1267.9 970.6C1266.0 972.9 1263.6 974.5 1259.3 975.8C1255.0 977.1 1245.5 977.7 1241.9 978.4C1238.3 979.1 1238.9 980.2 1237.6 980.1C1236.3 980.0 1235.1 979.6 1234.1 977.5C1233.1 975.4 1232.4 973.2 1231.6 967.2C1230.8 961.2 1229.9 949.9 1229.0 941.2C1228.1 932.5 1227.1 923.9 1226.4 915.2C1225.7 906.6 1225.5 899.4 1224.6 889.3C1223.7 879.2 1222.2 866.1 1221.2 854.6C1220.2 843.1 1219.2 828.8 1218.6 820.0C1217.9 811.2 1217.7 809.8 1217.3 801.7C1216.9 793.6 1216.1 781.6 1216.3 771.5C1216.5 761.4 1217.6 751.3 1218.3 741.2C1219.0 731.1 1220.3 721.0 1220.3 710.9C1220.3 700.8 1219.6 690.7 1218.3 680.6C1217.0 670.5 1213.7 660.4 1212.2 650.3C1210.7 640.2 1209.8 631.5 1209.2 620.0C1208.6 608.5 1208.4 593.0 1208.6 581.5C1208.8 570.0 1209.6 561.3 1210.6 551.2C1211.6 541.1 1213.4 531.0 1214.6 520.9C1215.8 510.8 1216.5 500.4 1217.7 490.6C1218.9 480.8 1220.9 471.4 1221.7 462.3C1222.5 453.2 1225.0 440.4 1222.5 436.0C1220.0 431.6 1209.7 432.4 1207.0 436.0C1204.3 439.6 1207.2 448.2 1206.6 457.3C1206.0 466.4 1204.7 479.0 1203.5 490.6C1202.3 502.2 1199.8 518.2 1199.5 527.0C1199.2 535.8 1200.2 537.7 1201.5 543.1C1202.8 548.5 1206.4 554.6 1207.6 559.3C1208.8 564.0 1208.8 567.4 1208.6 571.4C1208.4 575.4 1206.5 578.7 1206.5 583.5C1206.5 588.3 1208.3 596.0 1208.6 600.0C1208.8 604.0 1208.5 606.2 1208.0 607.8C1207.5 609.4 1206.4 610.8 1205.6 609.8C1204.8 608.8 1203.8 605.0 1203.0 602.0C1202.2 599.0 1201.1 590.7 1200.5 592.0C1199.9 593.3 1200.5 606.3 1199.5 609.8C1198.5 613.3 1197.3 613.8 1194.4 612.8C1191.5 611.8 1185.5 607.2 1182.3 603.7C1179.1 600.2 1177.0 596.3 1175.3 591.6C1173.6 586.9 1172.9 582.2 1172.2 575.5C1171.5 568.8 1171.0 559.3 1171.2 551.2C1171.4 543.1 1173.0 537.1 1173.2 527.0C1173.4 516.9 1172.2 503.4 1172.2 490.6C1172.2 477.8 1172.7 465.3 1173.2 450.2C1173.8 435.1 1174.7 416.9 1175.5 400.0C1176.3 383.1 1177.7 358.9 1178.2 349.0C1178.8 339.1 1178.2 345.6 1178.8 340.9C1179.3 336.2 1180.8 327.5 1181.5 320.8C1182.2 314.1 1182.0 306.7 1182.9 300.6C1183.8 294.5 1185.1 288.9 1186.9 284.4C1188.7 279.9 1190.7 276.7 1193.6 273.6C1196.5 270.5 1200.4 267.6 1204.4 265.6C1208.5 263.6 1211.8 263.3 1217.9 261.5C1224.0 259.7 1234.8 257.3 1240.8 254.8C1246.8 252.3 1251.2 249.0 1254.2 246.7C1257.2 244.4 1258.4 243.6 1258.5 241.0C1258.6 238.4 1256.4 235.0 1255.0 231.1C1253.6 227.2 1251.6 221.7 1250.3 217.7C1249.0 213.7 1248.6 210.1 1246.9 206.9C1245.2 203.8 1241.8 202.4 1240.2 198.8C1238.6 195.2 1237.7 189.0 1237.5 185.4C1237.3 181.8 1237.8 178.7 1238.8 177.3C1239.8 175.9 1242.6 178.3 1243.3 177.0C1244.0 175.7 1242.8 173.2 1243.1 169.2C1243.4 165.2 1243.4 158.2 1244.9 153.1C1246.4 147.9 1248.6 142.8 1252.3 138.3C1256.0 133.8 1261.5 129.1 1267.1 126.2C1272.7 123.3 1280.0 121.2 1286.0 120.8z"/>
<clipPath id="bodyclip"><use href="#bodyp"/></clipPath>
<filter id="skin" filterUnits="userSpaceOnUse" x="1150" y="100" width="300" height="900" color-interpolation-filters="sRGB">
<feGaussianBlur in="SourceAlpha" stdDeviation="13" result="b1"/>
<feGaussianBlur in="SourceAlpha" stdDeviation="3.500" result="b2"/>
<feComposite in="b1" in2="b2" operator="arithmetic" k2=".800" k3=".100" result="hm"/>
<feTurbulence type="fractalNoise" baseFrequency=".260" numOctaves="3" seed="4" result="n"/>
<feComposite in="hm" in2="n" operator="arithmetic" k2="1" k3=".011" result="hn"/>
<feDiffuseLighting in="hn" surfaceScale="40" diffuseConstant="1" lighting-color="#b39f9e" result="dl"><feDistantLight azimuth="-15" elevation="70"/></feDiffuseLighting>
<feSpecularLighting in="hm" surfaceScale="40" specularConstant=".200" specularExponent="7" lighting-color="#ffffff" result="sl"><feDistantLight azimuth="-20" elevation="45"/></feSpecularLighting>
<feSpecularLighting in="n" surfaceScale=".400" specularConstant=".400" specularExponent="36" lighting-color="#ffffff" result="sn"><feDistantLight azimuth="-20" elevation="50"/></feSpecularLighting>
<feComposite in="dl" in2="sl" operator="arithmetic" k2=".760" k3="1" k4=".150" result="lit0"/>
<feComposite in="lit0" in2="sn" operator="arithmetic" k2="1" k3="1" result="lit"/>
<feColorMatrix in="b2" type="matrix" values="0 0 0 1 0 0 0 0 1 0 0 0 0 1 0 0 0 0 0 1" result="em0"/>
<feComponentTransfer in="em0" result="em"><feFuncR type="table" tableValues=".6 .6 .6 .6 .6 .72 .86 .95 .98 1 1"/><feFuncG type="table" tableValues=".6 .6 .6 .6 .6 .72 .86 .95 .98 1 1"/><feFuncB type="table" tableValues=".6 .6 .6 .6 .6 .72 .86 .95 .98 1 1"/></feComponentTransfer>
<feComposite in="lit" in2="em" operator="arithmetic" k1="1" result="sh"/>
<feComposite in="sh" in2="SourceAlpha" operator="in"/>
</filter>
<filter id="bl3" x="-50%" y="-50%" width="200%" height="200%"><feGaussianBlur stdDeviation="3"/></filter>
<filter id="bl5" x="-50%" y="-50%" width="200%" height="200%"><feGaussianBlur stdDeviation="5"/></filter>
<filter id="bl2" x="-50%" y="-50%" width="200%" height="200%"><feGaussianBlur stdDeviation="1.600"/></filter>
<radialGradient id="rgD"><stop offset="0" stop-color="#3a2c2b"/><stop offset=".5" stop-color="#3a2c2b" stop-opacity=".6"/><stop offset="1" stop-color="#3a2c2b" stop-opacity="0"/></radialGradient><radialGradient id="rgW"><stop offset="0" stop-color="#fff4f2"/><stop offset=".5" stop-color="#fff4f2" stop-opacity=".6"/><stop offset="1" stop-color="#fff4f2" stop-opacity="0"/></radialGradient><linearGradient id="cylg" x1="1168" x2="1389" y1="0" y2="0" gradientUnits="userSpaceOnUse"><stop offset="0" stop-color="#7a015c"/><stop offset=".184" stop-color="#78005a"/><stop offset=".194" stop-color="#831568"/><stop offset=".450" stop-color="#9d2381"/><stop offset=".755" stop-color="#c8389b"/><stop offset=".860" stop-color="#c8389b"/><stop offset="1" stop-color="#a8288a"/></linearGradient><linearGradient id="discg" x1="1168" x2="1389" y1="0" y2="0" gradientUnits="userSpaceOnUse"><stop offset="0" stop-color="#9c1e7a"/><stop offset="1" stop-color="#ad2a8b"/></linearGradient>
<clipPath id="upclip"><path d="M1100 100H1500V343.600L1388.300 343.600L1362 345.500L1359.400 333L1356 336L1350 343.600L1334 347.700L1307 351L1280 351.700L1240 351.700L1222 349.500L1217.500 346.300L1213.800 349.300L1200 351L1178.200 349L1100 349z"/></clipPath>
</defs><g id="bodyg"><use href="#bodyp" fill="#a89a99" filter="url(#skin)"/></g><g clip-path="url(#bodyclip)"><ellipse cx="1290" cy="505" rx="75" ry="72" fill="url(#rgD)" opacity="0.4"/><path d="M1262 522L1322 522L1292 574z" fill="#3a2c2b" opacity=".22" filter="url(#bl3)"/><ellipse cx="1243" cy="880" rx="60" ry="170" fill="url(#rgD)" opacity="0.3"/><ellipse cx="1352" cy="880" rx="60" ry="170" fill="url(#rgD)" opacity="0.3"/><ellipse cx="1233" cy="488" rx="4" ry="12" fill="#fff4f2" opacity="0.5" filter="url(#bl2)" transform="rotate(-25 1233 488)"/><ellipse cx="1346" cy="478" rx="4" ry="12" fill="#fff4f2" opacity="0.5" filter="url(#bl2)" transform="rotate(25 1346 478)"/><ellipse cx="1258" cy="532" rx="3" ry="36" fill="#3a2c2b" opacity="0.2" filter="url(#bl3)" transform="rotate(-35 1258 532)"/><ellipse cx="1325" cy="528" rx="3" ry="36" fill="#3a2c2b" opacity="0.2" filter="url(#bl3)" transform="rotate(32 1325 528)"/><ellipse cx="1291" cy="566" rx="12" ry="6" fill="#3a2c2b" opacity="0.5" filter="url(#bl3)"/><ellipse cx="1291" cy="552" rx="9" ry="9" fill="#fff4f2" opacity="0.15" filter="url(#bl3)"/><ellipse cx="1246" cy="706" rx="9" ry="12" fill="#fff4f2" opacity="0.35" filter="url(#bl3)"/><ellipse cx="1241" cy="880" rx="4" ry="70" fill="#fff4f2" opacity="0.32" filter="url(#bl3)" transform="rotate(-3 1241 880)"/><ellipse cx="1349" cy="712" rx="8" ry="12" fill="#fff4f2" opacity="0.35" filter="url(#bl3)"/><ellipse cx="1357" cy="880" rx="4" ry="70" fill="#fff4f2" opacity="0.32" filter="url(#bl3)" transform="rotate(1 1357 880)"/><ellipse cx="1271" cy="690" rx="6" ry="110" fill="#3a2c2b" opacity="0.12" filter="url(#bl5)" transform="rotate(3 1271 690)"/><ellipse cx="1318" cy="680" rx="9" ry="120" fill="#3a2c2b" opacity="0.1" filter="url(#bl5)" transform="rotate(-5 1318 680)"/><ellipse cx="1336" cy="890" rx="4" ry="70" fill="#3a2c2b" opacity="0.12" filter="url(#bl3)"/><ellipse cx="1263" cy="880" rx="4" ry="60" fill="#3a2c2b" opacity="0.1" filter="url(#bl3)" transform="rotate(3 1263 880)"/><ellipse cx="1192" cy="500" rx="4" ry="50" fill="#fff4f2" opacity="0.22" filter="url(#bl3)" transform="rotate(2 1192 500)"/><ellipse cx="1378" cy="490" rx="4" ry="40" fill="#3a2c2b" opacity="0.3" filter="url(#bl3)" transform="rotate(-12 1378 490)"/><ellipse cx="1402" cy="490" rx="4" ry="50" fill="#fff4f2" opacity="0.25" filter="url(#bl3)" transform="rotate(-6 1402 490)"/><ellipse cx="1402" cy="565" rx="8" ry="14" fill="#fff4f2" opacity="0.12" filter="url(#bl5)"/><ellipse cx="1243" cy="545" rx="24" ry="52" fill="url(#rgW)" opacity="0.4" transform="rotate(-22 1243 545)"/><ellipse cx="1349" cy="535" rx="24" ry="58" fill="url(#rgW)" opacity="0.4" transform="rotate(20 1349 535)"/><ellipse cx="1249" cy="640" rx="12" ry="80" fill="url(#rgW)" opacity="0.3" transform="rotate(1 1249 640)"/><ellipse cx="1355" cy="630" rx="12" ry="90" fill="url(#rgW)" opacity="0.3" transform="rotate(-2 1355 630)"/><path d="M1180.0 589.0L1184.5 604.0" stroke="#3a2e2e" stroke-width="1.200" opacity=".6"/><path d="M1187.0 591.0L1191.5 608.5" stroke="#3a2e2e" stroke-width="1.200" opacity=".6"/><path d="M1194.0 592.0L1197.5 611.0" stroke="#3a2e2e" stroke-width="1.200" opacity=".6"/><path d="M1392.5 578.0L1390.5 595.0" stroke="#3a2e2e" stroke-width="1.200" opacity=".6"/><path d="M1399.5 580.0L1398.5 597.0" stroke="#3a2e2e" stroke-width="1.200" opacity=".6"/><path d="M1406.5 579.0L1407.5 594.0" stroke="#3a2e2e" stroke-width="1.200" opacity=".6"/><path d="M1239.5 967.0l-1.2 10.0" stroke="#3a2e2e" stroke-width="1.1" opacity=".7"/><path d="M1244.5 966.2l-1.2 9.4" stroke="#3a2e2e" stroke-width="1.1" opacity=".7"/><path d="M1249.5 965.4l-1.2 8.8" stroke="#3a2e2e" stroke-width="1.1" opacity=".7"/><path d="M1254.5 964.6l-1.2 8.2" stroke="#3a2e2e" stroke-width="1.1" opacity=".7"/><path d="M1260.5 963.8l-1.2 7.6" stroke="#3a2e2e" stroke-width="1.1" opacity=".7"/><path d="M1345.5 957.0l.3 9.0" stroke="#3a2e2e" stroke-width="1.1" opacity=".7"/><path d="M1350.5 957.3l.3 8.5" stroke="#3a2e2e" stroke-width="1.1" opacity=".7"/><path d="M1355.5 957.6l.3 8.0" stroke="#3a2e2e" stroke-width="1.1" opacity=".7"/><path d="M1360.0 957.9l.3 7.5" stroke="#3a2e2e" stroke-width="1.1" opacity=".7"/><path d="M1364.5 958.2l.3 7.0" stroke="#3a2e2e" stroke-width="1.1" opacity=".7"/></g><ellipse cx="1278.100" cy="345.850" rx="110.800" ry="15.500" fill="url(#discg)" transform="rotate(-1.216 1278.100 345.850)"/><path d="M1167.400 348.200A110.800 15.500 -1.216 0 0 1388.800 343.500L1384.100 445.100A106.650 13.200 0 0 1 1170.800 444.400z" fill="url(#cylg)"/><path d="M1384.100 445.100A106.650 13.200 0 0 1 1170.800 444.400" fill="none" stroke="#3d0730" stroke-width=".900"/><path d="M1167.400 348.200A110.800 15.500 -1.216 0 0 1388.800 343.500" fill="none" stroke="#1e0316" stroke-width="1.300"/><path d="M1167.400 348.200L1170.800 444.400" stroke="#3d0730" stroke-width=".800"/><path d="M1171.800 444.200l2 .5.300 3.500 1.200 .8-4.300-2z" fill="#404040"/><g clip-path="url(#upclip)"><use href="#bodyp" fill="#a89a99" filter="url(#skin)"/><g clip-path="url(#bodyclip)"><ellipse cx="1285" cy="182" rx="60" ry="85" fill="url(#rgD)" opacity="0.34"/><ellipse cx="1293" cy="157" rx="8" ry="7" fill="#fff4f2" opacity="0.5" filter="url(#bl3)"/><ellipse cx="1256" cy="200" rx="9" ry="28" fill="#3a2c2b" opacity="0.3" filter="url(#bl5)" transform="rotate(6 1256 200)"/><ellipse cx="1278" cy="237" rx="20" ry="8" fill="#3a2c2b" opacity="0.5" filter="url(#bl3)" transform="rotate(-12 1278 237)"/><ellipse cx="1286" cy="249" rx="22" ry="6" fill="#3a2c2b" opacity="0.3" filter="url(#bl3)"/><ellipse cx="1274" cy="190" rx="7" ry="3.2" fill="#3a2c2b" opacity="0.65" filter="url(#bl2)"/><ellipse cx="1299" cy="190" rx="7" ry="3.2" fill="#3a2c2b" opacity="0.65" filter="url(#bl2)"/><ellipse cx="1274" cy="184" rx="8" ry="1.8" fill="#fff4f2" opacity="0.3" filter="url(#bl2)"/><ellipse cx="1299" cy="184" rx="8" ry="1.8" fill="#fff4f2" opacity="0.3" filter="url(#bl2)"/><ellipse cx="1288" cy="199" rx="2.2" ry="7.5" fill="#fff4f2" opacity="0.8" filter="url(#bl2)"/><ellipse cx="1283" cy="201" rx="2.2" ry="6.5" fill="#3a2c2b" opacity="0.5" filter="url(#bl2)"/><ellipse cx="1286.5" cy="208.5" rx="5" ry="1.8" fill="#3a2c2b" opacity="0.6" filter="url(#bl2)"/><ellipse cx="1286" cy="214" rx="7" ry="1.5" fill="#3a2c2b" opacity="0.6" filter="url(#bl2)"/><ellipse cx="1286" cy="218" rx="5" ry="1.8" fill="#fff4f2" opacity="0.45" filter="url(#bl2)"/><ellipse cx="1286" cy="229" rx="8" ry="5" fill="#fff4f2" opacity="0.22" filter="url(#bl3)"/><ellipse cx="1304" cy="205" rx="6" ry="8" fill="#fff4f2" opacity="0.15" filter="url(#bl3)"/><ellipse cx="1240.5" cy="190" rx="2.5" ry="9" fill="#fff4f2" opacity="0.3" filter="url(#bl2)"/><ellipse cx="1327" cy="192" rx="3" ry="12" fill="#3a2c2b" opacity="0.3" filter="url(#bl2)"/><ellipse cx="1322" cy="305" rx="40" ry="44" fill="url(#rgW)" opacity="0.42"/><ellipse cx="1258" cy="306" rx="30" ry="38" fill="url(#rgW)" opacity="0.32"/><ellipse cx="1262" cy="270" rx="16" ry="3" fill="#fff4f2" opacity="0.35" filter="url(#bl2)" transform="rotate(8 1262 270)"/><ellipse cx="1312" cy="268" rx="18" ry="3" fill="#fff4f2" opacity="0.35" filter="url(#bl2)" transform="rotate(-6 1312 268)"/><ellipse cx="1287" cy="306" rx="2" ry="30" fill="#3a2c2b" opacity="0.35" filter="url(#bl2)"/><ellipse cx="1287" cy="262" rx="5" ry="4" fill="#3a2c2b" opacity="0.3" filter="url(#bl2)"/><ellipse cx="1202" cy="282" rx="10" ry="9" fill="#fff4f2" opacity="0.45" filter="url(#bl3)"/><ellipse cx="1366" cy="276" rx="6" ry="6" fill="#fff4f2" opacity="0.6" filter="url(#bl3)"/><ellipse cx="1374" cy="308" rx="4" ry="24" fill="#fff4f2" opacity="0.25" filter="url(#bl3)" transform="rotate(3 1374 308)"/><ellipse cx="1228" cy="330" rx="10" ry="25" fill="#3a2c2b" opacity="0.7" filter="url(#bl3)" transform="rotate(-3 1228 330)"/><ellipse cx="1357" cy="322" rx="5" ry="16" fill="#3a2c2b" opacity="0.6" filter="url(#bl3)" transform="rotate(3 1357 322)"/><ellipse cx="1345" cy="287" rx="5" ry="14" fill="#3a2c2b" opacity="0.3" filter="url(#bl3)" transform="rotate(-25 1345 287)"/><ellipse cx="1240" cy="290" rx="5" ry="14" fill="#3a2c2b" opacity="0.2" filter="url(#bl3)" transform="rotate(25 1240 290)"/></g></g></svg><span class="t" style="transform:scaleX(0.9972);transform-origin:0 0;left:1051.50px;top:975.82px;line-height:17px;height:17px;font-size:14.4px;color:#e2e2e2;font-family:'DejaVu Sans','Liberation Sans',sans-serif;">Selected 1 body 1 triangle mesh</span><span class="t" style="left:931.20px;top:911.41px;line-height:15px;height:15px;font-size:12.4px;color:#1c1cd0;font-family:'DejaVu Sans','Liberation Sans',sans-serif;">Z</span><span class="t" style="left:891.60px;top:950.81px;line-height:15px;height:15px;font-size:12.4px;color:#d01c1c;font-family:'DejaVu Sans','Liberation Sans',sans-serif;">X</span><span class="t" style="left:939.60px;top:959.01px;line-height:15px;height:15px;font-size:12.4px;color:#d8b020;font-family:'DejaVu Sans','Liberation Sans',sans-serif;">Y</span><svg style="left:891px;top:900px" width="120" height="102" viewBox="891 900 120 102"><path d="M934.800 958v-28" stroke="#1212b0" stroke-width="2"/><path d="M934.800 926.300l3 7.500h-6z" fill="#2020d8"/><path d="M934 958.800h-24" stroke="#b01212" stroke-width="2"/><path d="M903.800 958.800l7.500-3v6z" fill="#5a0808"/><circle cx="934.800" cy="958.800" r="3" fill="#d8b020"/><circle cx="933.800" cy="957.800" r="1.200" fill="#f6e070"/><path d="M991 953.500q-1.500-12-6.200-21" fill="none" stroke="#7c7c7c" stroke-width="1.400"/><path d="M983.300 928.800l5.300 5.800-6.300 2z" fill="#7c7c7c"/><path d="M991 963.500q-1.500 12-6.200 20.500" fill="none" stroke="#7c7c7c" stroke-width="1.400"/><path d="M983.300 987.400l5.300-5.800-6.300-2z" fill="#7c7c7c"/></svg><div class="abs" style="left:1399.300px;top:110.200px;width:202px;height:221.500px;background:#2e2e2e;border:1.200px solid #a7c8d8;box-shadow:2px 2px 3px rgba(0,0,0,.45)"></div><div class="abs" style="left:1404.200px;top:175.100px;width:192px;height:15.200px;background:#282828"></div><div class="abs" style="left:1404.200px;top:251.200px;width:192px;height:15.300px;background:#282828"></div><div class="abs" style="left:1403.400px;top:192.600px;width:96.700px;height:56px;background:#464646"></div><span class="t" style="letter-spacing:0.384px;left:1408.00px;top:158.29px;line-height:14px;height:14px;color:#e2e2e2;">Multidomain Mes</span><span class="t" style="letter-spacing:0.032px;left:1507.80px;top:158.29px;line-height:14px;height:14px;color:#e2e2e2;">Reconstruct Hull</span><span class="t" style="transform:scaleX(0.9561);transform-origin:0 0;left:1481.00px;top:175.69px;line-height:14px;height:14px;color:#1f82bd;">Patches</span><span class="t" style="transform:scaleX(0.9770);transform-origin:0 0;left:1489.80px;top:251.79px;line-height:14px;height:14px;color:#1f82bd;">Help</span><span class="t" style="letter-spacing:0.075px;left:1408.00px;top:234.49px;line-height:14px;height:14px;color:#b5d9ee;">Intersection Patch</span><span class="t" style="transform:scaleX(0.9214);transform-origin:0 0;left:1429.80px;top:310.49px;line-height:14px;height:14px;color:#e2e2e2;">Examples</span><span class="t" style="letter-spacing:0.186px;left:1509.90px;top:310.49px;line-height:14px;height:14px;color:#e2e2e2;">Documentation</span><svg style="left:1396px;top:108px" width="212" height="228" viewBox="1396 108 212 228"><path d="M1452.200 121.600L1438.500 135.300l14.200 13.600 13.100-14.200z" fill="#8ec4e4"/><path d="M1438.500 135.300l16.900 2.100-2.700 11.500z" fill="#f0c896"/><path d="M1452.200 121.600L1438.500 135.300l14.200 13.600 13.100-14.200zM1452.200 121.600l3.200 15.800M1438.500 135.300l16.900 2.100 10.400-2.700M1455.400 137.400l-2.700 11.500" fill="none" stroke="#f4f4f4" stroke-width=".900" stroke-linejoin="round"/><circle cx="1460.300" cy="142.900" r="4.500" fill="#2e2e2e" stroke="#1a86c4" stroke-width="2.400"/><circle cx="1460.300" cy="142.900" r="5.900" fill="none" stroke="#1a86c4" stroke-width="1.600" stroke-dasharray="2.300 2.330"/><g fill="none" stroke="#fff" stroke-width="1.600" stroke-linejoin="round"><path d="M1536.700 121.600l20.700 1.100 4.900 12-2.700 14.200-24.900-5.500zM1536.700 121.600l22.900 27.300M1557.400 122.700l-22.700 20.700M1548.100 134.700l14.200 0"/></g><path d="M1442.900 204.600q1-3.200 3-4l3.500-2.500h9.300l-1.100 8.200-8.500 1.300-3.500.8q-2.700-1.500-2.700-3.800z" fill="none" stroke="#f4f4f4" stroke-width="1.100" stroke-linejoin="round"/><path d="M1448.300 213.600a5.500 4.600 0 0 1 11 0z" fill="#1a86c4"/><path d="M1438.500 212.300l16.900 4.900 10.400-4.900-13.600 13.900zM1455.400 217.200l-3.200 9" fill="none" stroke="#f4f4f4" stroke-width="1.150" stroke-linejoin="round"/><path d="M1437 283v19.800c6-1.200 10.500-1 15.200.9 4.700-1.900 9.200-2.100 15.200-.9V283" fill="none" stroke="#1a86c4" stroke-width="1.800"/><path d="M1440 281.500v17.700c5-.9 8.500-.6 12.200 1 3.700-1.600 7.200-1.900 12.200-1v-17.700" fill="none" stroke="#fff" stroke-width="1.800"/><path d="M1452.200 295.500v4.500" stroke="#fff" stroke-width="1.200"/><circle cx="1452.200" cy="280.100" r="4.700" fill="#fff"/><rect x="1450.200" y="283.500" width="4" height="6" rx="1.600" fill="#fff"/><path d="M1452.200 272v1.800M1446.300 274.200l1.300 1.300M1458.100 274.200l-1.300 1.300M1444.400 280.100h1.600M1458.400 280.100h1.600M1446.300 286l1.300-1.300M1458.100 286l-1.300-1.300" stroke="#fff" stroke-width="1.100"/><path d="M1557.500 276.500l4.500 1-2.500 11" fill="none" stroke="#fff" stroke-width="1.600"/><path d="M1536.500 272.100h18.300q1.800 0 1.800 1.800v16M1548 299.300h-11.500q-1.800 0-1.800-1.800v-23.600q0-1.800 1.800-1.800" fill="none" stroke="#fff" stroke-width="2"/><path d="M1540 299.300l7 2.500v-2.500z" fill="#fff"/><path d="M1538 275.500h10.500M1538 278.700h15M1538 281.900h15M1538 285.100h15M1538 288.300h10M1538 291.500h8M1538 294.700h8" stroke="#b9b9b9" stroke-width="1.300"/><circle cx="1556.100" cy="295.300" r="7.500" fill="#2e2e2e" stroke="#1a86c4" stroke-width="1.600"/><path d="M1554.600 293.200h2v4.800M1554.400 298.300h4" fill="none" stroke="#1a86c4" stroke-width="1.400"/><circle cx="1556.100" cy="290.700" r="1" fill="#1a86c4"/><rect x="1401.400" y="190.400" width="104.600" height="60.600" rx="3.500" fill="none" stroke="#e8281c" stroke-width="4.200"/></svg>
<span class="t" style="transform:scaleX(0.9278);transform-origin:0 0;left:3.50px;top:1007.69px;line-height:14px;height:14px;color:#e6e6e6;">Ready</span><span class="t" style="letter-spacing:0.141px;left:1420.50px;top:1007.69px;line-height:14px;height:14px;color:#e0e0e0;">Model Units: mm / deg</span><span class="t" style="letter-spacing:0.191px;left:1558.50px;top:1007.69px;line-height:14px;height:14px;color:#e0e0e0;">Cursor: x=-254 z=1.54e+03</span>
<svg style="left:1896px;top:1004px" width="22" height="22" viewBox="-10.200 -10.700 22 22"><rect x="-1.100" y="-8.200" width="2.200" height="4.300" rx=".500" fill="#ffffff" transform="rotate(180)"/><rect x="-1.100" y="-8.200" width="2.200" height="4.300" rx=".500" fill="#e4e4e4" transform="rotate(135)"/><rect x="-1.100" y="-8.200" width="2.200" height="4.300" rx=".500" fill="#d2d2d2" transform="rotate(90)"/><rect x="-1.100" y="-8.200" width="2.200" height="4.300" rx=".500" fill="#a4a4a4" transform="rotate(45)"/><rect x="-1.100" y="-8.200" width="2.200" height="4.300" rx=".500" fill="#8a8a8a" transform="rotate(0)"/><rect x="-1.100" y="-8.200" width="2.200" height="4.300" rx=".500" fill="#666666" transform="rotate(315)"/><rect x="-1.100" y="-8.200" width="2.200" height="4.300" rx=".500" fill="#474747" transform="rotate(270)"/></svg><div class="abs" style="left:2px;top:1025.700px;width:1917px;height:5.500px;background:#0a8ecf"></div>
<div class="abs" style="left:2px;top:1031.200px;width:1917px;height:1.300px;background:#04304c"></div>

</div>

<div class="abs" style="left:34.800px;top:1038.600px;width:6.400px;height:3px;border-radius:2px;background:#d8404a"></div>
<div class="abs" style="left:1920px;top:0;width:6px;height:1020px;background:#f5f5f5"></div>
<div class="abs" style="left:1920px;top:0;width:6px;height:42px;background:#e9e9e9"></div>
<div class="abs" style="left:1924.500px;top:95px;width:2px;height:48px;background:#fdfdfd;border-left:1px solid #d6d6d6"></div>
<div class="abs" style="left:0;top:1032.500px;width:1919px;height:1px;background:#73536c"></div>
<div class="abs" style="left:1918.400px;top:0;width:1.900px;height:1032.700px;background:#0b0f15"></div>

</body></html>
